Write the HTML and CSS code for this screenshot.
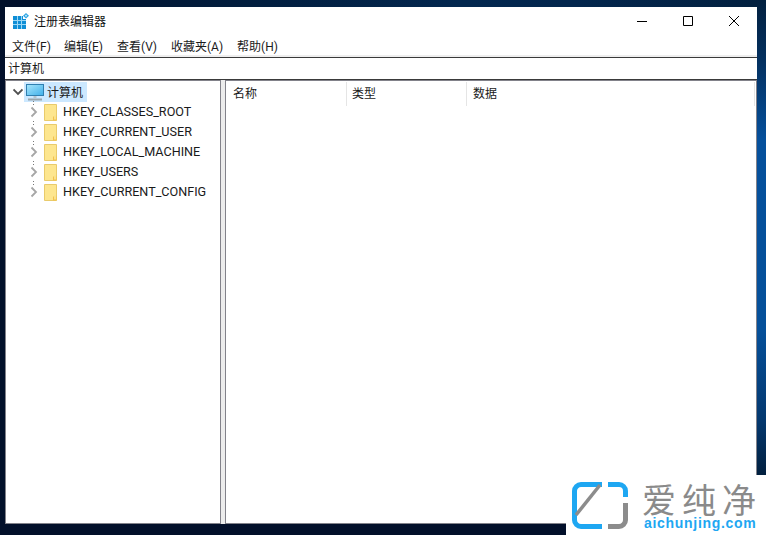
FILE: index.html
```html
<!DOCTYPE html>
<html lang="zh">
<head>
<meta charset="utf-8">
<title>注册表编辑器</title>
<link rel="stylesheet" href="styles.css">
</head>
<body>
<svg class="defs" width="0" height="0">
  <defs>
    <linearGradient id="screen" x1="0" y1="0" x2="1" y2="1">
      <stop offset="0" stop-color="#a9e6fc"/>
      <stop offset="1" stop-color="#3fb0ea"/>
    </linearGradient>
    <symbol id="folder" viewBox="0 0 14 17">
      <path d="M.5.500h12v16H.5z" fill="#fde68f" stroke="#e9cb6c"/>
      <path d="M9 12.500h3.500v4H9z" fill="#f2c24e"/>
      <path d="M10 11.500h2v4h-2z" fill="#fbe28a"/>
    </symbol>
    <symbol id="chev-right" viewBox="0 0 10 12">
      <path d="M2.500 1.500L7 6l-4.500 4.500" fill="none" stroke="#a6a6a6" stroke-width="1.800"/>
    </symbol>
  </defs>
</svg>
<div class="window">
  <header class="titlebar">
    <svg class="app-icon" width="16" height="16" viewBox="0 0 16 16">
      <path fill="#0f8ed6" d="M0 3h10v3h3v10H0z"/>
      <path stroke="#9ad7f5" stroke-width="1" fill="none" d="M0 7.500h13M0 11.500h13M4.500 3v13M8.500 3v13"/>
      <path fill="#2fa6e4" d="M13 0l3 2.800-3 2.800-3-2.800z"/>
      <circle cx="13" cy="2.800" r="1" fill="#bfe6fa"/>
    </svg>
    <span class="title">注册表编辑器</span>
    <div class="controls">
      <svg class="ctl" width="46" height="28" viewBox="0 0 46 28"><path d="M18 14.500h10" stroke="#000"/></svg>
      <svg class="ctl" width="46" height="28" viewBox="0 0 46 28"><path d="M18.500 9.500h9v9h-9z" fill="none" stroke="#000"/></svg>
      <svg class="ctl" width="46" height="28" viewBox="0 0 46 28"><path d="M18 9l10 10M28 9L18 19" stroke="#000" fill="none"/></svg>
    </div>
  </header>
  <nav class="menubar">
    <span class="menu">文件(F)</span>
    <span class="menu">编辑(E)</span>
    <span class="menu">查看(V)</span>
    <span class="menu">收藏夹(A)</span>
    <span class="menu">帮助(H)</span>
  </nav>
  <div class="address">计算机</div>
  <div class="panes">
    <aside class="tree">
      <div class="node root">
        <svg class="chev" width="10" height="10" viewBox="0 0 10 10"><path d="M.5 2.500L5 7l4.500-4.500" fill="none" stroke="#505050" stroke-width="1.800"/></svg>
        <span class="root-sel">
          <svg width="19" height="17" viewBox="0 0 19 17">
            <rect x=".5" y=".5" width="17" height="11" fill="url(#screen)" stroke="#2f7fb0"/>
            <path d="M7.500 12h3v2h-3z" fill="#b5c3cc"/>
            <path d="M2 15.500h14" stroke="#9aa6ad" stroke-width="2"/>
          </svg>
          <span class="root-label">计算机</span>
        </span>
      </div>
      <div class="node key"><svg class="chev" width="10" height="12"><use href="#chev-right"/></svg><svg width="14" height="17"><use href="#folder"/></svg><span class="key-label">HKEY_CLASSES_ROOT</span></div>
      <div class="node key"><svg class="chev" width="10" height="12"><use href="#chev-right"/></svg><svg width="14" height="17"><use href="#folder"/></svg><span class="key-label">HKEY_CURRENT_USER</span></div>
      <div class="node key"><svg class="chev" width="10" height="12"><use href="#chev-right"/></svg><svg width="14" height="17"><use href="#folder"/></svg><span class="key-label">HKEY_LOCAL_MACHINE</span></div>
      <div class="node key"><svg class="chev" width="10" height="12"><use href="#chev-right"/></svg><svg width="14" height="17"><use href="#folder"/></svg><span class="key-label">HKEY_USERS</span></div>
      <div class="node key"><svg class="chev" width="10" height="12"><use href="#chev-right"/></svg><svg width="14" height="17"><use href="#folder"/></svg><span class="key-label">HKEY_CURRENT_CONFIG</span></div>
    </aside>
    <div class="splitter"></div>
    <section class="list">
      <div class="list-head">
        <span class="col col-name">名称</span>
        <span class="col col-type">类型</span>
        <span class="col col-data">数据</span>
      </div>
    </section>
  </div>
</div>
<div class="watermark">
  <svg width="58" height="48" viewBox="0 0 58 48">
    <path d="M30 2.500H9A6.500 6.500 0 0 0 2.500 9v29A6.500 6.500 0 0 0 9 44.500h21" fill="none" stroke="#1ea7f2" stroke-width="5"/>
    <path d="M36 2.500h11A6.500 6.500 0 0 1 53.500 9v6" fill="none" stroke="#1ea7f2" stroke-width="5"/>
    <path d="M53.500 21v17a6.500 6.500 0 0 1-6.500 6.500H36" fill="none" stroke="#8c8c8c" stroke-width="5"/>
    <path d="M4 33L28 3" fill="none" stroke="#8c8c8c" stroke-width="3.500"/>
  </svg>
  <div class="wm-text">
    <div class="wm-cn">爱纯净</div>
    <div class="wm-en">aichunjing.com</div>
  </div>
</div>
</body>
</html>
```
FILE: styles.css
```css
html, body {
  margin: 0;
  height: 535px;
  overflow: hidden;
}
body {
  position: relative;
  box-sizing: border-box;
  padding: 7px 9px 11px 5px;
  background:
    linear-gradient(180deg, #02203f 0, #04305f 60px, #05509c 140px, #05509a 330px, #04386f 420px, #02203f 475px) right top / 9px 475px no-repeat,
    linear-gradient(90deg, #02102a 0, #021f40 35%, #03274f 60%, #03264d 75%, #02203f 100%) left top / 100% 7px no-repeat,
    #02102a;
  font-family: "Noto Sans CJK SC", "Liberation Sans", sans-serif;
  font-size: 12px;
  color: #1a1a1a;
}
.defs { position: absolute; }
.window {
  height: 517px;
  background: #fff;
  display: flex;
  flex-direction: column;
}
.titlebar {
  height: 28px;
  display: flex;
  align-items: center;
  padding-left: 8px;
  flex: none;
}
.app-icon { margin-right: 5px; margin-bottom: 1px; }
.title { color: #111; padding-bottom: 2px; }
.controls { margin-left: auto; display: flex; }
.ctl { display: block; }
.menubar {
  height: 20px;
  display: flex;
  gap: 14px;
  padding-left: 7px;
  align-items: center;
  flex: none;
  border-bottom: 2px solid #eeeeee;
}
.menu {
  white-space: nowrap;
  font-family: "Roboto", "Noto Sans CJK SC", sans-serif;
}
.menu:first-child { margin-right: -1px; }
.address {
  height: 21px;
  line-height: 20px;
  border-top: 1px solid #3a3a3a;
  border-bottom: 1px solid #3a3a3a;
  padding-left: 3px;
  flex: none;
  font-size: 12px;
}
.panes {
  flex: 1;
  display: flex;
  min-height: 0;
}
.tree {
  box-sizing: border-box;
  width: 216px;
  border: 1px solid #82828a;
  flex: none;
  padding-top: 1px;
}
.splitter { width: 4px; background: #ececec; flex: none; }
.list {
  flex: 1;
  border: 1px solid #82828a;
}
.node {
  height: 20px;
  display: flex;
  align-items: center;
  position: relative;
}
.key::before {
  content: "";
  position: absolute;
  left: 27px;
  top: -1px;
  width: 1px;
  height: 5px;
  background: repeating-linear-gradient(180deg, #777 0 1px, transparent 1px 3px);
}
.root .chev { margin-left: 7px; margin-right: 1px; }
.key .chev { margin-left: 23px; margin-right: 5px; }
.root-sel {
  display: flex;
  align-items: center;
  background: #cce8ff;
  height: 20px;
  padding: 0 4px 0 2px;
  gap: 2px;
}
.root-label { font-size: 12px; padding-bottom: 1px; }
.key-label {
  margin-left: 5px;
  padding-bottom: 2px;
  font-family: "Roboto", sans-serif;
  font-size: 12.600px;
  white-space: nowrap;
  color: #1a1a1a;
}
.list-head {
  display: flex;
  height: 24px;
  padding-top: 1px;
}
.col {
  box-sizing: border-box;
  height: 24px;
  line-height: 22px;
  border-right: 1px solid #e5e5e5;
  flex: none;
}
.col-name { width: 121px; padding-left: 7px; }
.col-type { width: 120px; padding-left: 5px; }
.col-data { width: 288px; padding-left: 6px; }
.watermark {
  position: absolute;
  left: 566px;
  top: 475px;
  width: 200px;
  height: 60px;
  background: #fff;
  display: flex;
  align-items: flex-start;
  box-sizing: border-box;
  padding: 7px 0 0 6px;
}
.wm-text { margin-left: 12px; margin-top: -1px; }
.wm-cn {
  font-size: 34px;
  line-height: 36px;
  letter-spacing: 6px;
  color: #8a8a8a;
  white-space: nowrap;
}
.wm-en {
  margin-left: 2px;
  margin-top: -1px;
  font-family: "Liberation Sans", sans-serif;
  font-weight: bold;
  font-size: 14px;
  line-height: 14px;
  letter-spacing: 0.7px;
  color: #1ea7f2;
  white-space: nowrap;
}
```
